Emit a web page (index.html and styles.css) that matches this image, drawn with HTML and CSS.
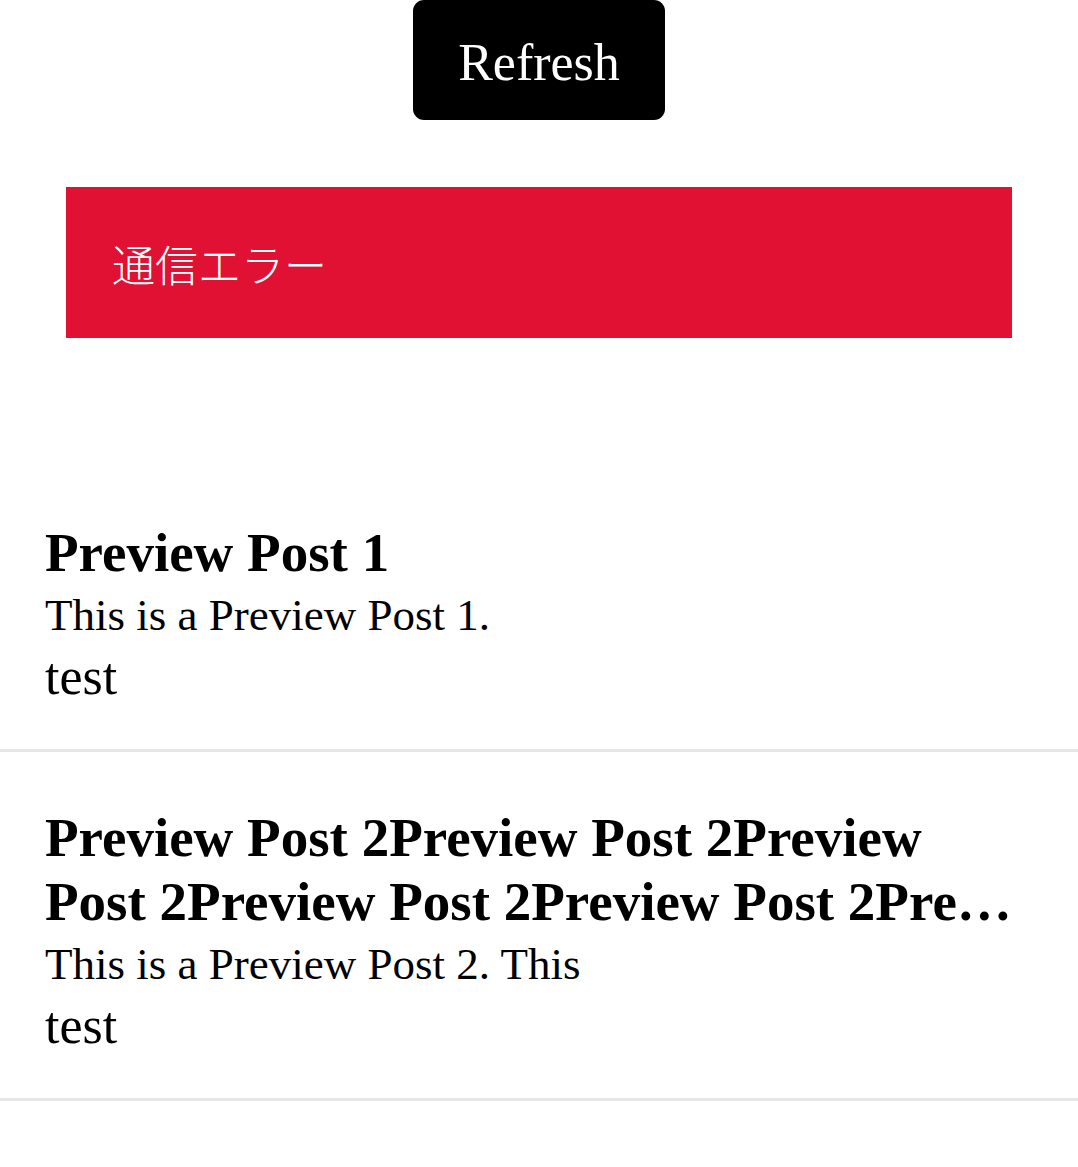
FILE: index.html
```html
<!DOCTYPE html>
<html lang="ja">
<head>
<meta charset="utf-8">
<title>Posts</title>
<link rel="stylesheet" href="styles.css">
</head>
<body>
<div class="page">
  <div class="toolbar">
    <button class="refresh" type="button">Refresh</button>
  </div>
  <div class="error">通信エラー</div>
  <ul class="posts">
    <li class="post">
      <h2 class="post-title"><span class="title-line">Preview Post 1</span></h2>
      <p class="post-body">This is a Preview Post 1.</p>
      <p class="post-tag">test</p>
    </li>
    <li class="post">
      <h2 class="post-title"><span class="title-line">Preview Post 2Preview Post 2Preview</span><span class="title-line clamp">Post 2Preview Post 2Preview Post 2Preview Post 2Preview Post 2Preview Post 2</span></h2>
      <p class="post-body">This is a Preview Post 2. This</p>
      <p class="post-tag">test</p>
    </li>
  </ul>
</div>
</body>
</html>
```

FILE: styles.css
```css
html, body {
  margin: 0;
  padding: 0;
  background: #ffffff;
}

.page {
  font-family: "Liberation Serif", "Noto Sans CJK JP", serif;
  color: #000000;
}

.toolbar {
  display: flex;
  justify-content: center;
}

.refresh {
  display: flex;
  align-items: center;
  justify-content: center;
  width: 252px;
  height: 120px;
  margin: 0;
  padding: 6px 0 0;
  box-sizing: border-box;
  border: none;
  border-radius: 11px;
  background: #000000;
  color: #ffffff;
  font-family: "Liberation Serif", serif;
  font-size: 52px;
  line-height: 1;
  cursor: pointer;
}

.error {
  margin: 67px 66px 0;
  height: 151px;
  box-sizing: border-box;
  padding: 0 46px;
  display: flex;
  align-items: center;
  background: #e01133;
  color: #ffffff;
  font-family: "Noto Sans CJK JP", sans-serif;
  font-weight: 300;
  font-size: 43px;
}

.posts {
  list-style: none;
  margin: 129px 0 0;
  padding: 0;
}

.post {
  padding: 54px 45px 42px;
  border-bottom: 3px solid #e6e6e6;
}

.post-title {
  margin: 0;
  font-size: 55px;
  line-height: 64px;
  font-weight: 700;
}

.title-line {
  display: block;
}

.clamp {
  white-space: nowrap;
  overflow: hidden;
  text-overflow: ellipsis;
  padding-right: 20px;
}

.post-body {
  margin: 0;
  font-size: 45px;
  line-height: 61px;
}

.post-tag {
  margin: 0;
  font-size: 52px;
  line-height: 61px;
}
```
